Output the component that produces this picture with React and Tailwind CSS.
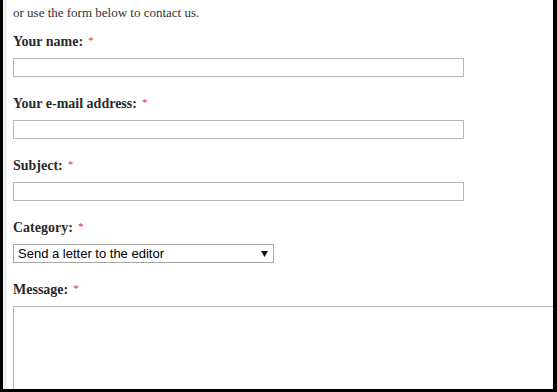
export default function App() {
  const serif = { fontFamily: '"Liberation Serif", "Times New Roman", serif' };
  const Label = ({ children, className = "" }) => (
    <div
      className={`h-[20px] leading-[20px] text-[14px] font-bold text-[#2a2a2a] ${className}`}
      style={serif}
    >
      {children}
      <span className="ml-[5px] text-[11px] font-normal text-[#e0303a] relative -top-[2px]">*</span>
    </div>
  );
  const Input = () => (
    <div className="mt-[6px] h-[19px] w-[451px] border border-[#b6b6b6] bg-white" />
  );
  return (
    <div className="w-[557px] h-[392px] bg-black pl-[3px] pr-[4px] pb-[3px] flex overflow-hidden">
      <div className="w-[4px] h-full bg-[#f1f1f1] shrink-0" />
      <div className="flex-1 h-full bg-white pl-[6px] pt-[4px] overflow-hidden">
        <div className="text-[13px] leading-[18px] text-[#333]" style={serif}>
          or use the form below to contact us.
        </div>
        <Label className="mt-[10px]">Your name:</Label>
        <Input />
        <Label className="mt-[17px]">Your e-mail address:</Label>
        <Input />
        <Label className="mt-[17px]">Subject:</Label>
        <Input />
        <Label className="mt-[17px]">Category:</Label>
        <div
          className="mt-[6px] h-[19px] w-[261px] border border-[#a6a6a6] bg-white flex items-center justify-between pl-[4px] pr-[5px] text-[13px] leading-[17px] text-black"
          style={{ fontFamily: '"Liberation Sans", Arial, sans-serif' }}
        >
          <span>Send a letter to the editor</span>
          <svg width="7" height="6" viewBox="0 0 7 6">
            <path d="M0 0 H7 L3.5 6 Z" fill="#111" />
          </svg>
        </div>
        <Label className="mt-[17px]">Message:</Label>
        <div className="mt-[6px] h-[200px] w-[580px] border border-[#b6b6b6] bg-white" />
      </div>
    </div>
  );
}
